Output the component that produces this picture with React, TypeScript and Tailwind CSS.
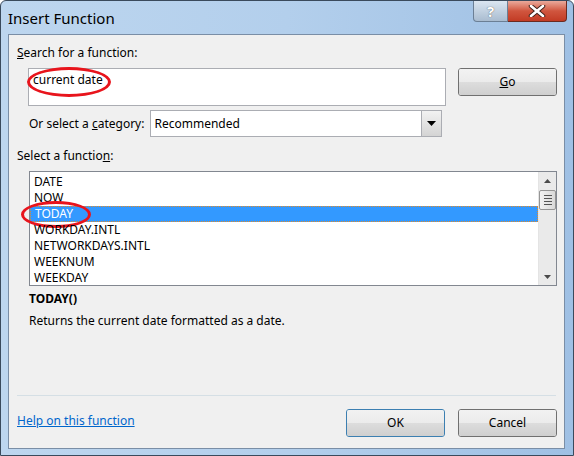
import React from "react";

const font = { fontFamily: '"Noto Sans", "Open Sans", sans-serif' };

const rows = ["DATE", "NOW", "TODAY", "WORKDAY.INTL", "NETWORKDAYS.INTL", "WEEKNUM", "WEEKDAY"];

function WinButton({ label, underline, isDefault }: { label: string; underline?: boolean; isDefault?: boolean }) {
  return (
    <div
      className={
        "relative w-[99px] h-[28px] rounded-[3px] border flex flex-col overflow-hidden " +
        (isDefault ? "border-[#3c7fb1] shadow-[inset_0_0_0_1px_#8fd6f5]" : "border-[#707070] shadow-[inset_0_0_0_1px_#fcfcfc]")
      }
    >
      <div className="h-1/2 bg-gradient-to-b from-[#f2f2f2] to-[#ebebeb]" />
      <div className="h-1/2 bg-gradient-to-b from-[#dddddd] to-[#cfcfcf]" />
      <div className="absolute inset-0 flex items-center justify-center text-[12px] text-black">
        {underline ? (
          <span>
            <span className="underline">{label[0]}</span>
            {label.slice(1)}
          </span>
        ) : (
          label
        )}
      </div>
    </div>
  );
}

export default function App() {
  return (
    <div
      style={font}
      className="w-[574px] h-[456px] relative overflow-hidden rounded-t-[6px] border border-[#3a4a5c] bg-gradient-to-r from-[#bdd6ef] via-[#b3cfec] to-[#9fc0e4] flex flex-col"
    >
      {/* title bar */}
      <div className="h-[33px] flex items-start shrink-0">
        <div className="pl-[7px] pt-[7px] text-[15px] text-black leading-[20px]">Insert Function</div>
        <div className="ml-auto mr-[6px] flex">
          <div className="w-[35px] h-[21px] rounded-bl-[4px] border border-t-0 border-[#6b7f95] bg-gradient-to-b from-[#dbe6f1] to-[#a9bcd0] flex items-center justify-center text-white text-[15px] font-bold [text-shadow:0_0_1px_#333]">
            ?
          </div>
          <div className="w-[59px] h-[21px] rounded-br-[4px] border border-t-0 border-l-0 border-[#6b2a20] bg-gradient-to-b from-[#e9a99b] via-[#d0553e] to-[#c23b24] flex items-center justify-center">
            <svg width="18" height="12" viewBox="0 0 18 12">
              <path d="M3 1 L15 11 M15 1 L3 11" stroke="#40221b" strokeWidth="4.5" strokeLinecap="round" />
              <path d="M3 1 L15 11 M15 1 L3 11" stroke="#ffffff" strokeWidth="2.6" strokeLinecap="round" />
            </svg>
          </div>
        </div>
      </div>

      {/* client area */}
      <div className="ml-[7px] mr-[8px] h-[415px] border border-[#7a8ea6] bg-[#f0f0f0] text-[12px] text-black flex flex-col">
        <div className="pl-[8px] pt-[10px] leading-[16px]">
          <span className="underline">S</span>earch for a function:
        </div>

        <div className="flex mt-[7px] pl-[19px] pr-[7px]">
          <div className="relative w-[418px] h-[38px] bg-white border border-[#abadb3] pl-[4px] pt-[3px] leading-[16px]">
            current date
            <div className="absolute left-[-2px] top-[-2px] w-[84px] h-[30px] rounded-[50%] border-[3px] border-[#e8141c]" />
          </div>
          <div className="ml-auto">
            <WinButton label="Go" underline />
          </div>
        </div>

        <div className="flex items-center mt-[4px] pl-[20px] h-[27px]">
          <span className="leading-[16px]">
            Or select a <span className="underline">c</span>ategory:
          </span>
          <div className="ml-[6px] w-[292px] h-[27px] bg-white border border-[#abadb3] flex items-center">
            <span className="pl-[3px] flex-1">Recommended</span>
            <div className="w-[20px] h-[25px] border-l border-[#abadb3] bg-gradient-to-b from-[#f2f2f2] to-[#d4d4d4] flex items-center justify-center">
              <svg width="9" height="5" viewBox="0 0 9 5">
                <path d="M0 0 H9 L4.5 5 Z" fill="#000" />
              </svg>
            </div>
          </div>
        </div>

        <div className="pl-[8px] mt-[11px] leading-[16px]">
          Select a functio<span className="underline">n</span>:
        </div>

        <div className="ml-[20px] mr-[7px] mt-[7px] h-[115px] bg-white border border-[#828790] flex">
          <div className="flex-1 pt-[2px] flex flex-col">
            {rows.map((r) => (
              <div
                key={r}
                className={
                  "relative h-[16px] shrink-0 flex items-center pl-[4px] " +
                  (r === "TODAY" ? "bg-[#3399ff] text-white border border-dotted border-[#e08a2a] pl-[3px]" : "")
                }
              >
                <span className="leading-[14px]">{r}</span>
                {r === "TODAY" && (
                  <div className="absolute left-[-10px] top-[-6px] w-[70px] h-[27px] rounded-[50%] border-[3px] border-[#e8141c]" />
                )}
              </div>
            ))}
          </div>
          <div className="w-[18px] bg-[#eaeaea] border-l border-[#e4e4e4] flex flex-col items-center">
            <div className="h-[17px] flex items-center justify-center">
              <svg width="7" height="4" viewBox="0 0 7 4">
                <path d="M0 4 H7 L3.5 0 Z" fill="#4a4a4a" />
              </svg>
            </div>
            <div className="w-[17px] h-[20px] mt-[1px] rounded-[2px] border border-[#959595] bg-gradient-to-r from-[#f3f3f3] to-[#d9d9d9] flex flex-col items-center justify-center gap-[2px]">
              <div className="w-[8px] h-[1px] bg-[#555]" />
              <div className="w-[8px] h-[1px] bg-[#555]" />
              <div className="w-[8px] h-[1px] bg-[#555]" />
              <div className="w-[8px] h-[1px] bg-[#555]" />
            </div>
            <div className="mt-auto h-[17px] flex items-center justify-center">
              <svg width="7" height="4" viewBox="0 0 7 4">
                <path d="M0 0 H7 L3.5 4 Z" fill="#4a4a4a" />
              </svg>
            </div>
          </div>
        </div>

        <div className="pl-[20px] mt-[5px] font-bold leading-[16px]">TODAY()</div>
        <div className="pl-[20px] mt-[6px] leading-[16px]">Returns the current date formatted as a date.</div>

        <div className="mt-auto mx-[8px] h-px bg-[#d5dfe5]" />
        <div className="flex items-center pl-[8px] pr-[7px] mt-[13px] mb-[11px]">
          <span className="text-[#0066cc] underline leading-[16px] -mt-[4px]">Help on this function</span>
          <div className="ml-auto flex gap-[13px]">
            <WinButton label="OK" isDefault />
            <WinButton label="Cancel" />
          </div>
        </div>
      </div>
    </div>
  );
}
